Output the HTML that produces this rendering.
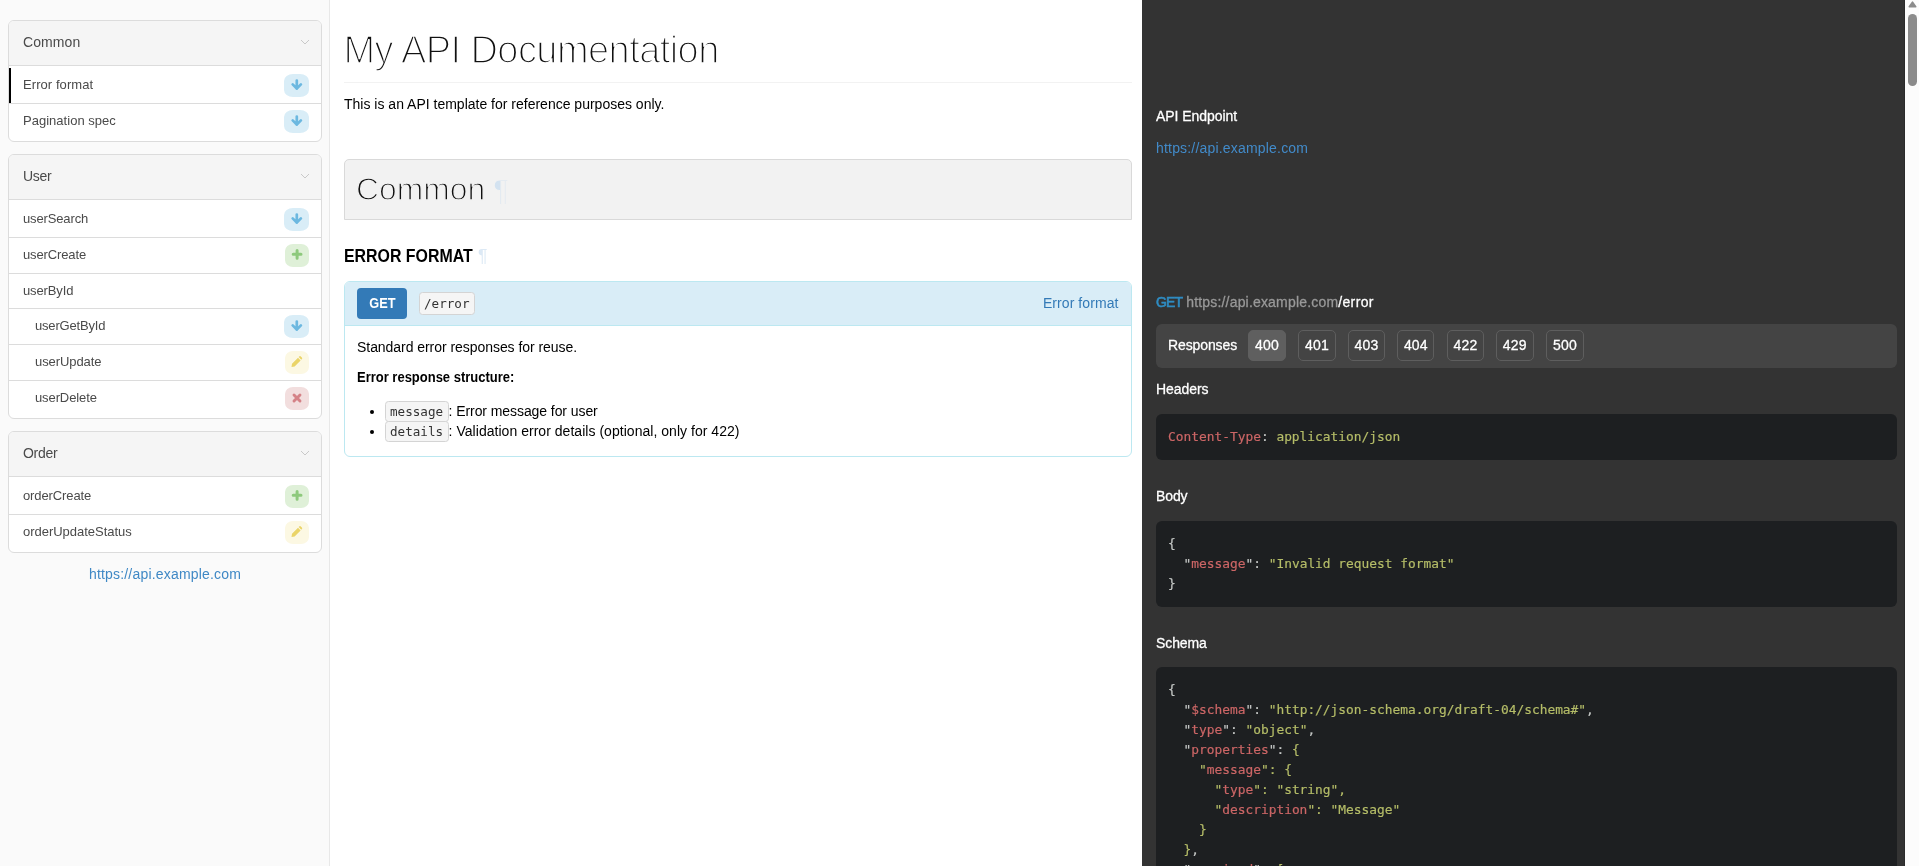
<!DOCTYPE html>
<html lang="en">
<head>
<meta charset="utf-8">
<title>My API Documentation</title>
<style>
*{box-sizing:border-box}
html,body{margin:0;padding:0}
html{width:1919px;height:866px;overflow:hidden}
body{width:1919px;height:866px;overflow:hidden;position:relative;background:#fff;color:#000;
  font:400 14px/19.88px "Liberation Sans",sans-serif;}
a{text-decoration:none;color:#337ab7}
.f{white-space:pre}
.sx{display:inline-block;transform-origin:0 50%}
.sxc{transform-origin:50% 50%}
.w5{-webkit-text-stroke:0.28px currentColor}
b,.w7{font-weight:700}
code,pre{font-family:"DejaVu Sans Mono","Liberation Mono",monospace}

/* ---------- left nav ---------- */
nav{will-change:transform;position:absolute;left:0;top:0;width:330px;height:866px;background:#fafafa;border-right:1px solid #e8e8e8}
.grp{position:absolute;left:8px;width:314px;border:1px solid #dcdcdc;border-radius:6px;background:#fff;overflow:hidden}
.grp .hd{height:43.8px;background:#f5f5f5;border-bottom:0;position:relative;color:#4a4a4a}
.grp .hd span{position:absolute;left:14px;top:12px}
.grp .hd svg{position:absolute;right:11.3px;top:18.1px}
.grp ul{list-style:none;margin:0;padding:1px 0 0 0;border-top:1px solid #dcdcdc}
.grp li{height:35.88px;border-top:1px solid #dcdcdc;position:relative;color:#4a4a4a;font-size:13px}
.grp li:first-child{border-top-color:transparent}
.grp li span{position:absolute;left:14px;top:7px}
.grp li.sub span{left:26px}
.grp li.on:before{content:"";position:absolute;left:0;top:0;bottom:0;width:2px;background:#000}
.bdg{position:absolute;right:12px;top:6px;width:24px;height:23px;border-radius:8px/7px}
.bdg.get{width:25px;border-radius:9px/7px}
.bdg svg{position:absolute;left:0;top:0}
.get{background:#d9edf7}
.post{background:#dff0d8}
.put{background:#fcf8e3}
.del{background:#f2dede}
.hl{color:#3f88c5}
.host{position:absolute;left:0;width:330px;top:565px;text-align:center}

/* ---------- middle ---------- */
.mid{will-change:transform;position:absolute;left:330px;top:0;width:812px;height:866px;background:#fff}

.mid h1{position:absolute;left:13.5px;top:27px;margin:0;font-weight:400;font-size:38px;line-height:46px;color:#111;-webkit-text-stroke:1.7px #fff}
.mid .hr{position:absolute;left:14px;top:82px;width:788px;height:1px;background:#f2f2f2}
.mid .intro{position:absolute;left:14px;top:95px}
.sec{position:absolute;left:14px;top:159px;width:788px;height:61px;background:#f2f2f2;border:1px solid #d9d9d9;border-radius:5px 5px 0 0}
.sec h2{position:absolute;left:11.3px;top:9px;transform:scaleX(1.027);transform-origin:0 0;margin:0;font-weight:400;font-size:31px;line-height:42px;color:#111;-webkit-text-stroke:1.3px #f2f2f2}
.sec .pl{position:absolute;left:148px;top:9px;font-size:30px;line-height:42px;color:#d3e2f0;-webkit-text-stroke:1.1px #f2f2f2}
.mid h3{position:absolute;left:14px;top:244px;margin:0;font-size:17.5px;line-height:25px;font-weight:700;text-transform:uppercase}
.mid .pl3{position:absolute;left:148px;top:244px;font-size:17.5px;line-height:25px;color:#dce9f5}
.act{position:absolute;left:14px;top:281px;width:788px;height:176px;border:1px solid #bce8f1;border-radius:6px;background:#fff;overflow:hidden}
.act .ah{height:44px;background:#d9edf7;border-bottom:1px solid #bce8f1;position:relative}
.btn{position:absolute;left:12px;top:6px;width:50px;padding-right:0;height:31px;border-radius:4px;background:#337ab7;color:#fff;font-weight:700;text-align:center;line-height:31px}
code.in{display:inline-block;font-size:12.6px;background:#f5f5f5;border:1px solid #d4d4d4;border-radius:3.5px;color:#333;padding:0 4.5px 0 4px;line-height:20px;height:20.5px}
.ah code.in{position:absolute;left:74px;top:10.3px;height:22.3px;line-height:21.5px;padding:0 4px}
.ah .nm{position:absolute;right:12.5px;top:12px}
.act p{position:absolute;left:12px;margin:0}
.act ul{position:absolute;left:12px;top:119.3px;margin:0;padding:0 0 0 28px;list-style:none}
.act li{position:relative;height:19.88px;white-space:nowrap}
.act li code.in{position:absolute;left:0;top:0}
.act li .f{position:absolute;left:63.6px;top:1px}
.act li:before{content:"";position:absolute;left:-15.45px;top:8.35px;width:4.5px;height:4.5px;border-radius:50%;background:#000}

/* ---------- right ---------- */
.right{will-change:transform;position:absolute;left:1142px;top:0;width:762px;height:866px;background:#333;color:#fff;overflow:hidden}
.right .t{position:absolute;left:14px}
.right a{color:#428bca}
.mth{color:#2f8cc2;-webkit-text-stroke:0.6px #2f8cc2}
.hst{color:#999}
.tabs{position:absolute;left:14px;top:324px;width:741px;height:44px;background:#444;border-radius:6px}
.tabs .lb{position:absolute;left:12px;top:12px}
.tab{position:absolute;top:6px;height:31px;border:1px solid #5e5e5e;border-radius:5px;line-height:29px;text-align:center}
.tab.on{background:#5f5f5f;border-color:#5f5f5f}
pre{position:absolute;left:14px;width:741px;margin:0;padding:12.5px 12px 0 12px;background:#1d1f21;border-radius:6px;color:#c5c8c6;font-size:12.86px;line-height:20px;overflow:hidden;-webkit-text-stroke:0.18px}
.k{color:#cc6666}.s{color:#b5bd68}
.sbar{position:absolute;left:1904px;top:0;width:15px;height:866px;background:#fcfcfc;border-left:1px solid #2b2b2b}
.sbar i{position:absolute;left:3px;top:14px;width:9px;height:72px;border-radius:5px;background:#8b8b8b}
.sbar svg{position:absolute;left:0;top:0}
</style>
</head>
<body>

<nav>
  <div class="grp" style="top:20px;height:122px">
    <div class="hd"><span class="f" style="letter-spacing:0.096px">Common</span><svg width="10" height="6" viewBox="0 0 10 6"><path d="M1 1l4 4 4-4" fill="none" stroke="#c9c9c9" stroke-width="1"/></svg></div>
    <ul>
      <li class="on"><span class="f" style="letter-spacing:0.070px">Error format</span><i class="bdg get"><svg width="25" height="23" viewBox="0 0 25 23"><path d="M12.8 6.5v8.2M8.7 10.4l4.1 4.2 4.1-4.2" fill="none" stroke="#6cb8e0" stroke-width="2.7" stroke-linecap="round" stroke-linejoin="round"/></svg></i></li>
      <li><span class="f" style="letter-spacing:0.023px">Pagination spec</span><i class="bdg get"><svg width="25" height="23" viewBox="0 0 25 23"><path d="M12.8 6.5v8.2M8.7 10.4l4.1 4.2 4.1-4.2" fill="none" stroke="#6cb8e0" stroke-width="2.7" stroke-linecap="round" stroke-linejoin="round"/></svg></i></li>
    </ul>
  </div>
  <div class="grp" style="top:154px;height:265px">
    <div class="hd"><span class="f" style="letter-spacing:-0.270px">User</span><svg width="10" height="6" viewBox="0 0 10 6"><path d="M1 1l4 4 4-4" fill="none" stroke="#c9c9c9" stroke-width="1"/></svg></div>
    <ul>
      <li><span class="f" style="letter-spacing:-0.138px">userSearch</span><i class="bdg get"><svg width="25" height="23" viewBox="0 0 25 23"><path d="M12.8 6.5v8.2M8.7 10.4l4.1 4.2 4.1-4.2" fill="none" stroke="#6cb8e0" stroke-width="2.7" stroke-linecap="round" stroke-linejoin="round"/></svg></i></li>
      <li><span class="f" style="letter-spacing:-0.127px">userCreate</span><i class="bdg post"><svg width="24" height="23" viewBox="0 0 24 23"><path d="M12.1 6.4v7.8M8.2 10.3h7.8" fill="none" stroke="#8dc97c" stroke-width="3" stroke-linecap="round"/></svg></i></li>
      <li><span class="f" style="letter-spacing:-0.127px">userById</span></li>
      <li class="sub"><span class="f" style="letter-spacing:-0.179px">userGetById</span><i class="bdg get"><svg width="25" height="23" viewBox="0 0 25 23"><path d="M12.8 6.5v8.2M8.7 10.4l4.1 4.2 4.1-4.2" fill="none" stroke="#6cb8e0" stroke-width="2.7" stroke-linecap="round" stroke-linejoin="round"/></svg></i></li>
      <li class="sub"><span class="f" style="letter-spacing:-0.075px">userUpdate</span><i class="bdg put"><svg width="24" height="23" viewBox="0 0 24 23"><path d="M6.5 15.9l.5-3.1 6-6 2.6 2.6-6 6z M13.7 6.1l.8-.8q.5-.45 1.050 0l1.500 1.500q.45.5 0 1.050l-.8.8z" fill="#ead468"/></svg></i></li>
      <li class="sub"><span class="f" style="letter-spacing:-0.106px">userDelete</span><i class="bdg del"><svg width="24" height="23" viewBox="0 0 24 23"><path d="M9 8l6 6M15 8l-6 6" fill="none" stroke="#d58287" stroke-width="2.9" stroke-linecap="round"/></svg></i></li>
    </ul>
  </div>
  <div class="grp" style="top:431px;height:122px">
    <div class="hd"><span class="f" style="letter-spacing:-0.297px">Order</span><svg width="10" height="6" viewBox="0 0 10 6"><path d="M1 1l4 4 4-4" fill="none" stroke="#c9c9c9" stroke-width="1"/></svg></div>
    <ul>
      <li><span class="f" style="letter-spacing:-0.108px">orderCreate</span><i class="bdg post"><svg width="24" height="23" viewBox="0 0 24 23"><path d="M12.1 6.4v7.8M8.2 10.3h7.8" fill="none" stroke="#8dc97c" stroke-width="3" stroke-linecap="round"/></svg></i></li>
      <li><span class="f" style="letter-spacing:-0.020px">orderUpdateStatus</span><i class="bdg put"><svg width="24" height="23" viewBox="0 0 24 23"><path d="M6.5 15.9l.5-3.1 6-6 2.6 2.6-6 6z M13.7 6.1l.8-.8q.5-.45 1.050 0l1.500 1.500q.45.5 0 1.050l-.8.8z" fill="#ead468"/></svg></i></li>
    </ul>
  </div>
  <div class="host"><a class="f hl" style="letter-spacing:0.188px">https://api.example.com</a></div>
</nav>

<div class="mid">
  <h1 class="f rw36" style="letter-spacing:-0.563px">My API Documentation</h1>
  <div class="hr"></div>
  <div class="intro"><span class="f" style="letter-spacing:0.001px">This is an API template for reference purposes only.</span></div>
  <div class="sec"><h2>Common</h2><span class="pl">&para;</span></div>
  <h3 class="f h3f sx" style="transform:scaleX(0.9089)">Error format</h3><span class="pl3">&para;</span>
  <div class="act">
    <div class="ah"><span class="btn"><span class="f w7 sx sxc" style="transform:scaleX(0.9115)">GET</span></span><code class="in">/error</code><a class="nm"><span class="f" style="letter-spacing:0.074px">Error format</span></a></div>
    <p style="top:56px"><span class="f" style="letter-spacing:-0.049px">Standard error responses for reuse.</span></p>
    <p style="top:86px"><b><span class="f sx" style="transform:scaleX(0.9275)">Error response structure:</span></b></p>
    <ul>
      <li><code class="in">message</code><span class="f" style="letter-spacing:-0.077px">: Error message for user</span></li>
      <li><code class="in">details</code><span class="f" style="letter-spacing:0.033px">: Validation error details (optional, only for 422)</span></li>
    </ul>
  </div>
</div>

<div class="right">
  <div class="t" style="top:107px"><span class="f w5" style="letter-spacing:-0.053px">API Endpoint</span></div>
  <div class="t" style="top:139px"><a class="f" style="letter-spacing:0.188px">https://api.example.com</a></div>
  <div class="t" style="top:293px"><span class="f w5 mth" style="letter-spacing:-0.885px">GET</span><span class="f w5 hst" style="letter-spacing:0.182px"> https://api.example.com</span><span class="f w5" style="letter-spacing:0.354px">/error</span></div>
  <div class="tabs">
    <span class="lb"><span class="f w5" style="letter-spacing:-0.113px">Responses</span></span>
    <span class="tab on" style="left:92px;width:38px"><span class="f w5" style="letter-spacing:0.172px">400</span></span>
    <span class="tab" style="left:142px;width:38px"><span class="f w5" style="letter-spacing:0.172px">401</span></span>
    <span class="tab" style="left:192px;width:37px"><span class="f w5" style="letter-spacing:0.172px">403</span></span>
    <span class="tab" style="left:241.2px;width:37.3px"><span class="f w5" style="letter-spacing:0.172px">404</span></span>
    <span class="tab" style="left:291.2px;width:36.5px"><span class="f w5" style="letter-spacing:0.172px">422</span></span>
    <span class="tab" style="left:340px;width:37.5px"><span class="f w5" style="letter-spacing:0.172px">429</span></span>
    <span class="tab" style="left:390px;width:38px"><span class="f w5" style="letter-spacing:0.172px">500</span></span>
  </div>
  <div class="t" style="top:380px"><span class="f w5" style="letter-spacing:-0.056px">Headers</span></div>
  <pre style="top:414px;height:46px"><span class="k">Content-Type</span>: <span class="s">application/json</span></pre>
  <div class="t" style="top:487px"><span class="f w5" style="letter-spacing:-0.098px">Body</span></div>
  <pre style="top:521px;height:86px">{
  "<span class="k">message</span>": <span class="s">"Invalid request format"</span>
}</pre>
  <div class="t" style="top:634px"><span class="f w5" style="letter-spacing:-0.091px">Schema</span></div>
  <pre style="top:667px;height:210px">{
  "<span class="k">$schema</span>": <span class="s">"http://json-schema.org/draft-04/schema#"</span>,
  "<span class="k">type</span>": <span class="s">"object"</span>,
  "<span class="k">properties</span>": <span class="s">{
    "<span class="k">message</span>": {
      "<span class="k">type</span>": "string",
      "<span class="k">description</span>": "Message"
    }
  }</span>,
  "<span class="k">required</span>": <span class="s">[
    "message"
  ]</span>
}</pre>
</div>
<div class="sbar"><svg width="14" height="12" viewBox="0 0 14 12"><path d="M4.300 6.800L7.500 2.200l3.200 4.600z" fill="#8b8b8b" stroke="#8b8b8b" stroke-width="1.600" stroke-linejoin="round"/></svg><i></i></div>

</body>
</html>
